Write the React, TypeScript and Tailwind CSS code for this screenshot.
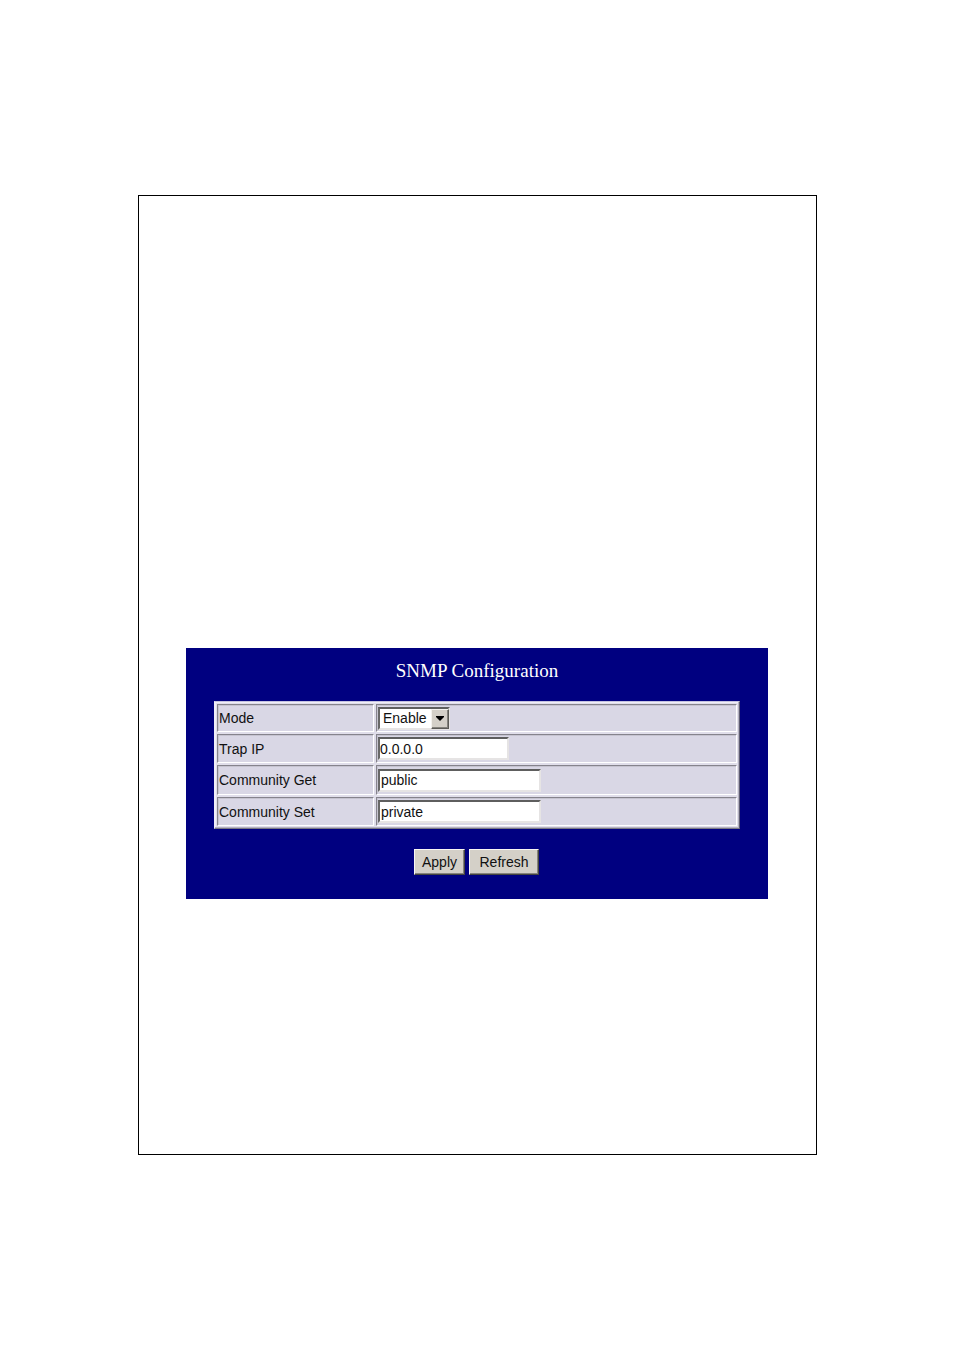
import type { ReactNode } from 'react'

const fieldStyle =
  'block border-2 border-t-[#5e5e5e] border-l-[#686868] border-r-[#e6e4e4] border-b-[#e6e4e4] bg-white text-sm text-[#111] outline-none'

const buttonStyle =
  'h-[26px] border border-t-[#f8f6f2] border-l-[#f8f6f2] border-r-[#45443f] border-b-[#45443f] bg-[#d4d0c8] text-center text-sm leading-[24px] text-[#111] shadow-[inset_-1px_-1px_0_#85837d]'

const cellStyle =
  'border border-t-[#85838c] border-l-[#85838c] border-r-white border-b-white p-px align-middle shadow-[inset_1px_1px_0_#c6c4d0]'

type RowProps = {
  id: string
  label: string
  height: string
  children: ReactNode
}

function Row({ id, label, height, children }: RowProps) {
  return (
    <tr className={height}>
      <th scope="row" className={`${cellStyle} w-[157px] text-left font-normal`}>
        <label htmlFor={id} className="block">{label}</label>
      </th>
      <td className={cellStyle}>{children}</td>
    </tr>
  )
}

export default function App() {
  return (
    <div className="min-h-screen bg-white pt-[195px] pr-[137px] pb-[195px] pl-[138px] font-['Liberation_Sans',Arial,sans-serif] text-sm text-[#111]">
      <main className="min-h-[960px] border border-black pt-[452px] pr-12 pl-[47px]">
        <form className="bg-[#000080] px-7 pt-3 pb-6" onSubmit={(e) => e.preventDefault()}>
          <h1 className="text-center font-['Liberation_Serif','Times_New_Roman',serif] text-[19px] leading-[21px] text-white">
            SNMP Configuration
          </h1>

          <table className="mt-5 w-full border-separate border-spacing-[2px] border border-t-[#c4c2e0] border-l-[#f0eef8] border-r-[#5b5970] border-b-[#7b7985] bg-[#e0deea] shadow-[inset_-1px_-1px_0_#b5b3c0,inset_1px_1px_0_#f0eef8]">
            <tbody className="[&_td]:bg-[#d9d7e5] [&_th]:bg-[#d9d7e5]">
              <Row id="mode" label="Mode" height="h-[28px]">
                <div className="relative w-[72px]">
                  <select id="mode" defaultValue="enable" className={`${fieldStyle} h-[23px] w-full appearance-none pl-[3px] leading-[19px]`}>
                    <option value="enable">Enable</option>
                    <option value="disable">Disable</option>
                  </select>
                  {/* drop-down arrow button */}
                  <span className="pointer-events-none absolute top-[2px] right-px bottom-px flex w-[18px] items-center justify-center border border-t-[#f4f2ee] border-l-[#f4f2ee] border-r-[#5c5b57] border-b-[#5c5b57] bg-[#d4d0c8] shadow-[inset_-1px_-1px_0_#85837d]">
                    <svg width="8" height="5" viewBox="0 0 8 5" aria-hidden="true">
                      <path d="M0 0h8v1L4 5L0 1z" fill="#000" />
                    </svg>
                  </span>
                </div>
              </Row>
              <Row id="trap-ip" label="Trap IP" height="h-[29px]">
                <input id="trap-ip" type="text" defaultValue="0.0.0.0" className={`${fieldStyle} h-[23px] w-[131px]`} />
              </Row>
              <Row id="community-get" label="Community Get" height="h-[30px]">
                <input id="community-get" type="text" defaultValue="public" className={`${fieldStyle} h-[23px] w-[163px] pl-px`} />
              </Row>
              <Row id="community-set" label="Community Set" height="h-[29px]">
                <input id="community-set" type="text" defaultValue="private" className={`${fieldStyle} h-[23px] w-[163px] pl-px`} />
              </Row>
            </tbody>
          </table>

          <div className="mt-5 flex justify-center gap-1 pr-px">
            <button type="submit" className={`${buttonStyle} w-[51px]`}>Apply</button>
            <button type="button" className={`${buttonStyle} w-[70px]`}>Refresh</button>
          </div>
        </form>
      </main>
    </div>
  )
}
